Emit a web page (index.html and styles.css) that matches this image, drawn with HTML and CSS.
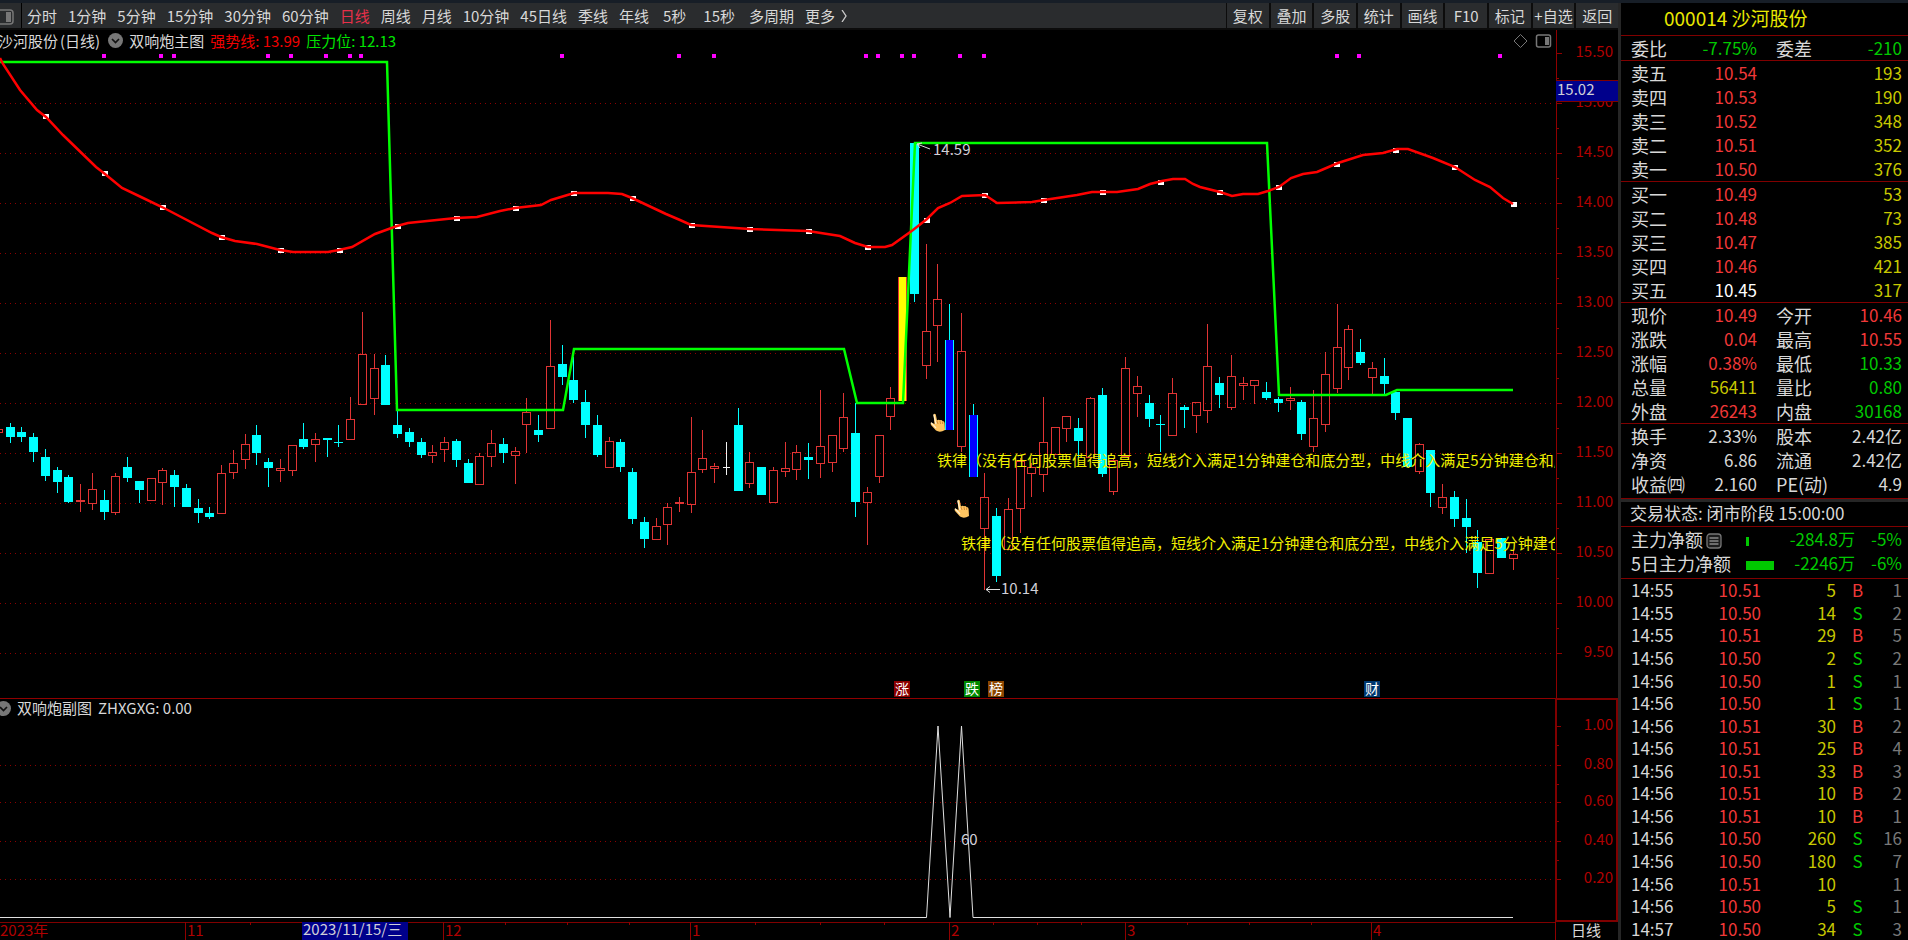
FILE: index.html
```html
<!DOCTYPE html>
<html lang="zh-CN">
<head>
<meta charset="utf-8">
<title>000014 沙河股份</title>
<link rel="stylesheet" href="styles.css">
</head>
<body>
<div class="app">
  <main class="main">
    <header class="toolbar">
      <button class="layout-toggle" aria-label="侧栏">
        <svg width="21" height="24" viewBox="0 0 21 24"><rect x="-5" y="6" width="18" height="14" rx="3" fill="none" stroke="#777" stroke-width="1.5"/><rect x="6" y="8" width="5" height="10" fill="#777"/></svg>
      </button>
      <nav class="periods">
        <button>分时</button><button>1分钟</button><button>5分钟</button><button>15分钟</button><button>30分钟</button><button>60分钟</button><button class="active">日线</button><button>周线</button><button>月线</button><button>10分钟</button><button>45日线</button><button>季线</button><button>年线</button><button class="wide">5秒</button><button class="wide">15秒</button><button>多周期</button><button class="more">更多<svg width="7" height="12" viewBox="0 0 7 12"><path d="M1 0 L5 6 L1 12" fill="none" stroke="#ccc" stroke-width="1.3"/></svg></button>
      </nav>
      <div class="actions">
        <button>复权</button><button>叠加</button><button>多股</button><button>统计</button><button>画线</button><button>F10</button><button>标记</button><button>+自选</button><button>返回</button>
      </div>
    </header>

    <div class="workspace">
      <section class="pane">
        <div class="legend legend-main">
          <span>沙河股份</span><span class="period-name">(日线)</span>
          <svg class="chev" width="15" height="15" viewBox="0 0 15 15"><circle cx="7.5" cy="7.5" r="7.5" fill="#777"/><path d="M4 6 L7.5 9.500 L11 6" fill="none" stroke="#111" stroke-width="1.7"/></svg>
          <span>双响炮主图</span><span class="strong">强势线: 13.99</span><span class="press">压力位: 12.13</span>
          <svg class="tools" width="39" height="16" viewBox="0 0 39 16"><path d="M7.500 1.500 L14 8 L7.500 14.500 L1 8 Z" fill="none" stroke="#777"/><rect x="23.500" y="2" width="14" height="12" rx="2" fill="none" stroke="#777" stroke-width="1.500"/><rect x="32" y="4" width="4" height="8" fill="#777"/></svg>
        </div>
        <svg class="plot" id="price" viewBox="0 52 1555 646" preserveAspectRatio="xMinYMin slice"></svg>
      </section>
      <svg class="scale" id="priceScale" viewBox="0 30 63 668" preserveAspectRatio="xMinYMin slice"></svg>

      <section class="pane pane-sub">
        <div class="legend legend-sub">
          <svg class="chev" width="15" height="15" viewBox="0 0 15 15"><circle cx="7.5" cy="7.5" r="7.5" fill="#777"/><path d="M4 6 L7.5 9.500 L11 6" fill="none" stroke="#111" stroke-width="1.7"/></svg>
          <span>双响炮副图</span><span>ZHXGXG: 0.00</span>
        </div>
        <svg class="plot" id="signal" viewBox="0 720 1555 202" preserveAspectRatio="xMinYMin slice"></svg>
      </section>
      <svg class="scale scale-sub" id="signalScale" viewBox="2 700 59 220" preserveAspectRatio="xMinYMin slice"></svg>

      <svg class="dates" id="dates" viewBox="0 922 1555 18" preserveAspectRatio="xMinYMin slice"></svg>
      <div class="cycle">日线</div>
    </div>
  </main>

  <aside class="quote">
    <h1>000014 沙河股份</h1>
    <table class="grid">
      <colgroup><col class="c-l"><col><col class="c-r"><col></colgroup>
      <tr><th>委比</th><td class="g">-7.75%</td><th>委差</th><td class="g">-210</td></tr>
    </table>
    <table class="grid">
      <colgroup><col class="c-l"><col><col class="c-r"><col></colgroup>
      <tr><th>卖五</th><td class="r">10.54</td><td colspan="2" class="y">193</td></tr>
      <tr><th>卖四</th><td class="r">10.53</td><td colspan="2" class="y">190</td></tr>
      <tr><th>卖三</th><td class="r">10.52</td><td colspan="2" class="y">348</td></tr>
      <tr><th>卖二</th><td class="r">10.51</td><td colspan="2" class="y">352</td></tr>
      <tr><th>卖一</th><td class="r">10.50</td><td colspan="2" class="y">376</td></tr>
    </table>
    <table class="grid">
      <colgroup><col class="c-l"><col><col class="c-r"><col></colgroup>
      <tr><th>买一</th><td class="r">10.49</td><td colspan="2" class="y">53</td></tr>
      <tr><th>买二</th><td class="r">10.48</td><td colspan="2" class="y">73</td></tr>
      <tr><th>买三</th><td class="r">10.47</td><td colspan="2" class="y">385</td></tr>
      <tr><th>买四</th><td class="r">10.46</td><td colspan="2" class="y">421</td></tr>
      <tr><th>买五</th><td class="w">10.45</td><td colspan="2" class="y">317</td></tr>
    </table>
    <table class="grid">
      <colgroup><col class="c-l"><col><col class="c-r"><col></colgroup>
      <tr><th>现价</th><td class="r">10.49</td><th>今开</th><td class="r">10.46</td></tr>
      <tr><th>涨跌</th><td class="r">0.04</td><th>最高</th><td class="r">10.55</td></tr>
      <tr><th>涨幅</th><td class="r">0.38%</td><th>最低</th><td class="g">10.33</td></tr>
      <tr><th>总量</th><td class="y">56411</td><th>量比</th><td class="g">0.80</td></tr>
      <tr><th>外盘</th><td class="r">26243</td><th>内盘</th><td class="g">30168</td></tr>
    </table>
    <table class="grid grid-last">
      <colgroup><col class="c-l"><col><col class="c-r"><col></colgroup>
      <tr><th>换手</th><td>2.33%</td><th>股本</th><td>2.42亿</td></tr>
      <tr><th>净资</th><td>6.86</td><th>流通</th><td>2.42亿</td></tr>
      <tr><th>收益㈣</th><td>2.160</td><th>PE(动)</th><td>4.9</td></tr>
    </table>
    <p class="status">交易状态: 闭市阶段 15:00:00</p>
    <table class="grid flow">
      <colgroup><col class="c-name"><col class="c-bar"><col><col class="c-pct"></colgroup>
      <tr><th>主力净额<svg class="note" width="16" height="16" viewBox="0 0 16 16"><rect x="1" y="1" width="14" height="14" rx="3" fill="#1c1c1c" stroke="#777" stroke-width="1.300"/><path d="M3.500 5 H12.500 M3.500 8 H12.500 M3.500 11 H12.500" stroke="#888" stroke-width="1.300"/></svg></th><td class="bar-cell"><span class="bar" style="width:3px"></span></td><td class="g">-284.8万</td><td class="g">-5%</td></tr>
      <tr><th>5日主力净额</th><td class="bar-cell"><span class="bar" style="width:28px"></span></td><td class="g">-2246万</td><td class="g">-6%</td></tr>
    </table>
    <div class="ticks-wrap">
      <table class="ticks">
        <colgroup><col class="t-time"><col class="t-price"><col class="t-vol"><col class="t-side"><col></colgroup>
        <tbody id="ticks"></tbody>
      </table>
    </div>
  </aside>
</div>
<script src="app.js"></script>
</body>
</html>
```

FILE: styles.css
```css
* { box-sizing: border-box; }
html, body { margin: 0; height: 100%; background: #000; }
body {
  font-family: "Noto Sans CJK SC", "Noto Sans", sans-serif;
  font-size: 15px;
  color: #d8d8d8;
  overflow: hidden;
}
button { font: inherit; color: inherit; background: none; border: 0; padding: 0; white-space: nowrap; }
.app { display: flex; height: 100vh; border-top: 3px solid #171e27; }
.main { flex: 1; min-width: 0; display: flex; flex-direction: column; }

.toolbar { display: flex; height: 27px; background: #2a2c2e; border-bottom: 2px solid #0c0c0c; line-height: 25px; }
.layout-toggle { width: 22px; border-right: 1px solid #000; overflow: hidden; }
.layout-toggle svg { display: block; }
.periods { display: flex; gap: 11px; flex: 1; min-width: 0; overflow: hidden; padding-left: 5px; }
.periods .active { color: #e8304a; }
.periods .wide { padding: 0 3px; }
.periods .more { display: flex; align-items: center; gap: 6px; }
.actions { display: grid; grid-template-columns: repeat(9, 1fr); gap: 2px; width: 392px; background: #0c0c0c; padding-left: 1px; }
.actions button { background: #2a2c2e; overflow: hidden; }

.workspace { flex: 1; min-height: 0; display: grid; grid-template-columns: minmax(0, 1fr) 63px; grid-template-rows: minmax(0, 1fr) 224px 18px; }
.pane { display: flex; flex-direction: column; min-height: 0; overflow: hidden; }
.pane-sub { border-top: 1px solid #900000; }
.legend { display: flex; align-items: center; white-space: nowrap; gap: 6px; line-height: 18px; }
.legend-main { height: 22px; margin-left: -2px; padding-bottom: 1px; }
.legend-sub { height: 21px; margin-left: -4px; padding-bottom: 3px; }
.legend svg { flex: none; }
.period-name { margin-left: -4px; margin-right: 2px; }
.strong { color: #f00000; }
.press { color: #00e400; }
.tools { margin-left: auto; margin-right: 3px; }
.plot { flex: 1; min-height: 0; width: 100%; display: block; }
.scale { width: 100%; height: 100%; display: block; }
.scale-sub { border: 2px solid #800000; }
.dates { width: 100%; height: 100%; display: block; }
.cycle { border-left: 1px solid #900000; text-align: center; line-height: 16px; padding-right: 2px; }

svg text { font-size: 15px; fill: #b00000; }
svg .end { text-anchor: end; }
svg .note-text { fill: #f0f000; }
svg .lite { fill: #d0d0d8; }
svg .tag { font-size: 14px; fill: #fff; text-anchor: middle; }
.dot { stroke: #8c0000; stroke-dasharray: 1 4; }
.crisp { shape-rendering: crispEdges; }

.quote { width: 290px; border-left: 3px solid #262626; display: flex; flex-direction: column; font-size: 17px; }
.quote h1 { margin: 0; height: 33px; line-height: 30px; padding-left: 43px; font-size: 19px; font-weight: 400; color: #e8e800; border-bottom: 1px solid #800000; }
.grid, .ticks { table-layout: fixed; border-collapse: separate; border-spacing: 0; width: 100%; }
.grid { padding: 0 6px 0 10px; border-bottom: 1px solid #800000; }
.grid tr { height: 24px; }
.grid th, .grid td { padding: 0; line-height: 24px; white-space: nowrap; }
.grid th { font-weight: 400; text-align: left; font-size: 18px; }
.grid td { text-align: right; }
.grid th + td + th { padding-left: 19px; }
.c-l { width: 60px; }
.c-r { width: 79px; }
.grid-last { padding-bottom: 2px; }
.status { margin: 0; height: 28px; line-height: 22px; padding-left: 9px; border-top: 3px solid #262626; border-bottom: 1px solid #800000; }
.flow { padding-bottom: 3px; }
.c-name { width: 115px; }
.c-bar { width: 30px; }
.c-pct { width: 47px; }
.note { margin-left: 3px; vertical-align: -2px; }
.grid .bar-cell { text-align: left; }
.bar { display: inline-block; height: 9px; background: #00c800; }
.ticks-wrap { flex: 1; min-height: 0; }
.ticks { height: 100%; padding: 0 6px 0 10px; }
.ticks td { padding: 0; text-align: right; line-height: 22px; }
.ticks td:first-child { text-align: left; }
.ticks td:nth-child(4) { text-align: center; }
.ticks td:last-child { color: #787878; }
.t-time { width: 60px; }
.t-price { width: 70px; }
.t-vol { width: 75px; }
.t-side { width: 43px; }
.r { color: #f03838; }
.g { color: #00c800; }
.y { color: #c8c800; }
.w { color: #fff; }
```

FILE: app.js
```js
const NS = 'http://www.w3.org/2000/svg';
const add = (parent, tag, attrs, text) => {
  const el = document.createElementNS(NS, tag);
  for (const k in attrs) el.setAttribute(k, attrs[k]);
  if (text !== undefined) el.textContent = text;
  parent.appendChild(el);
  return el;
};
const byId = id => document.getElementById(id);

/* One bar per entry: kind, high, low, body top, body bottom.
   Levels are thirds of a pixel below the 13.23 price line. */
const bars = `c 428 488 440 470|c 440 485 455 470|c 460 545 470 515|c 507 602 530 587|c 560 638 571 605|c 586 668 590 665|r 612 695 661 667|r 579 691 628 671|c 631 721 661 695|r 579 706 587 698|c 530 605 560 593|c 604 668 604 631|r 595 664 595 664|r 564 675 569 608|c 571 680 586 620|c 613 680 624 680|c 657 728 684 698|c 681 717 699 710|r 556 703 579 702|r 511 597 549 578|r 462 567 493 541|c 436 556 466 518|c 534 620 545 563|r 538 605 564 574|r 496 587 496 574|c 429 507 477 500|r 459 545 478 496|c 475 530 475 480|c 436 500 486 489|r 351 481 418 481|r 96 376 223 376|r 223 406 265 356|c 226 376 256 376|c 391 473 436 461|c 444 500 455 485|c 474 533 486 526|r 496 548 516 529|r 471 545 486 510|c 477 560 482 541|c 538 609 549 609|r 519 615 527 615|r 451 560 490 532|c 474 548 492 518|r 501 612 512 529|r 354 518 396 436|c 406 485 451 466|r 121 446 258 446|c 196 316 253 290|c 230 368 301 361|c 331 473 366 436|c 406 530 436 526|r 471 563 482 563|c 477 575 486 560|c 564 731 575 717|c 710 804 725 777|r 714 780 738 780|r 670 796 681 735|r 650 695 665 671|r 410 698 576 675|r 451 578 535 570|r 549 608 558 566|w 485 586 561 564|c 384 634 436 634|r 516 623 546 611|c 560 646 560 646|r 561 668 569 668|r 486 590 564 577|r 496 601 516 570|c 489 597 530 541|r 331 593 497 551|r 466 575 466 548|r 339 515 411 507|c 369 710 459 665|r 620 796 636 668|r 466 608 466 590|r 320 451 355 412|y -10 363 -10 363|c -410 65 -410 41|r -107 297 153 259|r -47 245 58 139|b 72 450 181 450|r 99 515 212 502|b 372 592 406 592|r 580 930 652 746|c 684 905 707 889|r 654 810 686 810|r 535 759 543 686|r 550 650 560 581|r 350 635 487 585|r 442 525 442 525|r 407 485 407 446|c 415 535 445 484|r 351 535 355 535|c 324 590 344 581|r 535 646 540 637|r 230 531 265 531|r 287 410 317 342|c 346 440 369 417|c 406 515 432 436|r 294 469 340 469|c 376 443 380 391|r 366 458 366 409|r 132 428 258 394|c 291 383 309 346|r 226 391 288 383|r 291 361 309 319|r 301 372 301 319|c 305 361 335 353|c 350 395 358 369|r 320 391 354 364|c 361 481 366 462|r 331 515 415 500|r 216 455 283 436|r 72 338 201 326|r 136 301 148 263|c 178 256 215 248|r 245 342 265 293|c 234 346 287 312|c 335 421 335 399|c 414 560 414 560|r 489 582 493 575|c 511 680 511 638|r 612 702 651 683|c 634 741 650 717|c 657 818 714 741|c 750 923 785 879|r 778 882 778 882|c 775 834 775 834|r 811 871 823 836`
  .split('|').map(s => s.split(' '));

const price = byId('price');
for (let y = 103; y <= 653; y += 50)
  add(price, 'path', { d: `M0 ${y}.5H1555`, class: 'dot crisp' });

const INK = { c: '#00ffff', r: '#e03434', w: '#f0f0f0', y: '#e03030', b: '#00ffff' };
const candles = add(price, 'g', { class: 'crisp' });
const rect = (x, y, w, h, fill) => add(candles, 'rect', { x, y, width: w, height: h, fill });
rect(-5, 429, 8, 1, INK.r); rect(-5, 432, 8, 1, INK.r); rect(2, 429, 1, 4, INK.r);
bars.forEach(([kind, ...levels], i) => {
  const [hi, lo, top, bot] = levels.map(v => Math.round(280 + v / 3));
  const x = Math.round(9.7 + i * 11.742);
  const ink = INK[kind];
  const h = Math.max(1, bot - top);
  if (kind === 'r') {
    if (top > hi) rect(x, hi, 1, top - hi, ink);
    if (lo > bot) rect(x, bot, 1, lo - bot, ink);
    if (h < 3) rect(x - 4, top, 9, h, ink);
    else add(candles, 'rect', { x: x - 3.5, y: top + 0.5, width: 8, height: h - 1, fill: 'none', stroke: ink });
  } else {
    rect(x, hi, 1, Math.max(1, lo - hi), ink);
    rect(kind === 'w' ? x - 3 : x - 4, top, kind === 'w' ? 7 : 9, h, ink);
    if (kind === 'y') rect(x - 3, top, 7, h, '#ffff00');
    if (kind === 'b') rect(x - 3, top, 7, h, '#0000ff');
  }
});

const ma = [[0,58],[3,64],[20,90],[37,110],[46,117],[63,135],[96,167],[105,174],[122,188],[141,197],[162,207],[212,233],[221,237],[235,241],[257,244],[280,250],[293,252],[328,252],[339,250],[352,247],[375,234],[397,226],[408,223],[456,218],[477,217],[500,211],[515,208],[541,205],[551,200],[574,193],[608,193],[622,194],[632,198],[666,214],[680,220],[691,225],[750,229],[808,231],[840,236],[855,243],[868,247],[885,247],[892,245],[913,230],[927,219],[938,208],[950,203],[962,196],[985,195],[997,203],[1032,202],[1044,200],[1077,195],[1092,192],[1117,192],[1138,189],[1150,184],[1162,181],[1173,179],[1185,179],[1193,184],[1200,187],[1220,192],[1232,196],[1243,194],[1258,194],[1268,191],[1279,187],[1291,178],[1303,174],[1317,172],[1338,163],[1363,155],[1383,153],[1397,149],[1408,149],[1433,158],[1455,167],[1475,180],[1490,187],[1503,198],[1513,204]];
const yAt = x => {
  const k = ma.findIndex(p => p[0] >= x);
  if (k <= 0) return ma[k < 0 ? ma.length - 1 : 0][1];
  const [a, b] = [ma[k - 1], ma[k]];
  return a[1] + (b[1] - a[1]) * (x - a[0]) / (b[0] - a[0]);
};
for (let n = 0; n < 26; n++) {
  const x = Math.round(45 + n * 58.7);
  add(price, 'rect', { x: x - 2, y: Math.round(yAt(x)) - 2, width: 6, height: 5, fill: '#fff' });
}
add(price, 'polyline', { points: '0,62 387,62 397,410 563,410 574,349 844,349 857,403 903,403 915,143 1267,143 1279,395 1386,395 1397,390 1513,390', fill: 'none', stroke: '#00ff00', 'stroke-width': 2.5 });
add(price, 'polyline', { points: ma.join(' '), fill: 'none', stroke: '#ff0000', 'stroke-width': 2.5 });

[104,161,174,268,291,326,350,361,562,679,714,866,878,902,914,960,984,1337,1359,1500].forEach(x =>
  add(price, 'rect', { x: x - 2, y: 54, width: 4, height: 4, fill: '#ff00ff' }));

const rule = '铁律（没有任何股票值得追高，短线介入满足1分钟建仓和底分型，中线介入满足5分钟建仓和底分型';
add(price, 'text', { x: 937, y: 466, class: 'note-text' }, rule);
add(price, 'text', { x: 961, y: 549, class: 'note-text' }, rule);

add(price, 'path', { d: 'M917 144L930 149M917 144l5 -1M917 144l3 4', stroke: '#ddd', fill: 'none' });
add(price, 'text', { x: 933, y: 155, class: 'lite' }, '14.59');
add(price, 'path', { d: 'M986 589.5H1000M986 589.5l4 -3M986 589.5l4 3', stroke: '#ddd', fill: 'none' });
add(price, 'text', { x: 1001, y: 594, class: 'lite' }, '10.14');

[[930, 413], [954, 499]].forEach(([x, y]) => {
  const g = add(price, 'g', { transform: `translate(${x} ${y})` });
  add(g, 'path', { d: 'M3.500 1.500Q4.500 0 5.800 1.500L7 7.500Q8.500 6 10 7.300Q11.500 6.300 12.500 8Q14.500 8 14.600 10L15 17Q10 20 6 17.500L1 12Q0 10 1.500 9.500L4.500 11Z', fill: '#ffc561' });
  add(g, 'path', { d: 'M3.800 1.500L6 11M1 9.700L6 15', stroke: '#fff0d0', fill: 'none', 'stroke-width': 1.2 });
  add(g, 'path', { d: 'M7 8L8 11M10 8L10.500 11M12.600 8.500V11', stroke: '#c97d2c', fill: 'none', 'stroke-width': 0.8 });
});

[[894, '涨', '#8b0000'], [964, '跌', '#008800'], [988, '榜', '#8a4500'], [1364, '财', '#00386e']].forEach(([x, s, fill]) => {
  add(price, 'rect', { x, y: 681, width: 16, height: 16, fill });
  add(price, 'text', { x: x + 8, y: 694, class: 'tag' }, s);
});

const ps = byId('priceScale');
add(ps, 'path', { d: 'M1 30V698', stroke: '#900000', class: 'crisp' });
for (let n = 0; n < 13; n++) {
  const y = 53 + n * 50;
  add(ps, 'path', { d: `M1 ${y}.5H7` + (n < 12 ? `M1 ${y + 25}.5H4` : ''), stroke: '#900000', class: 'crisp' });
  add(ps, 'text', { x: 58, y: y + 4, class: 'end' }, (15.5 - n * 0.5).toFixed(2));
}
add(ps, 'rect', { x: 1, y: 81, width: 62, height: 20, fill: '#00008b' });
add(ps, 'path', { d: 'M1 80.5H63M1 101.5H63', stroke: '#800000' });
add(ps, 'text', { x: 2, y: 95, class: 'lite' }, '15.02');

const sg = byId('signal');
[765, 802, 841, 879].forEach(y => add(sg, 'path', { d: `M0 ${y}.5H1555`, class: 'dot crisp' }));
add(sg, 'polyline', { points: '0,917.5 926.5,917.5 938,726 950,917.5 961.5,726 973,917.5 1513,917.5', fill: 'none', stroke: '#e0e0e0', 'stroke-linejoin': 'bevel' });
add(sg, 'text', { x: 961, y: 845, class: 'lite' }, '60');

const ss = byId('signalScale');
[[726, '1.00'], [765, '0.80'], [802, '0.60'], [841, '0.40'], [879, '0.20']].forEach(([y, s]) => {
  add(ss, 'path', { d: `M2 ${y}.5H6` + (y < 879 ? `M2 ${y + 19}.5H4` : ''), stroke: '#900000', class: 'crisp' });
  add(ss, 'text', { x: 58, y: y + 4, class: 'end' }, s);
});

const dt = byId('dates');
add(dt, 'path', { d: 'M0 922.5H1555', stroke: '#800000' });
[250, 505, 567, 629, 755, 820, 884, 993, 1037, 1081, 1187, 1249, 1311].forEach(x =>
  add(dt, 'path', { d: `M${x}.5 922V925`, stroke: '#900000' }));
add(dt, 'text', { x: 0, y: 936 }, '2023年');
[[185, '11'], [443, '12'], [690, '1'], [949, '2'], [1125, '3'], [1371, '4']].forEach(([x, s]) => {
  add(dt, 'path', { d: `M${x}.5 922V940`, stroke: '#900000' });
  add(dt, 'text', { x: x + 2, y: 936 }, s);
});
add(dt, 'rect', { x: 302, y: 922, width: 106, height: 18, fill: '#00008b' });
add(dt, 'text', { x: 303, y: 935, class: 'lite' }, '2023/11/15/三');

const ticks = `14:55 10.51 5 B 1|14:55 10.50 14 S 2|14:55 10.51 29 B 5|14:56 10.50 2 S 2|14:56 10.50 1 S 1|14:56 10.50 1 S 1|14:56 10.51 30 B 2|14:56 10.51 25 B 4|14:56 10.51 33 B 3|14:56 10.51 10 B 2|14:56 10.51 10 B 1|14:56 10.50 260 S 16|14:56 10.50 180 S 7|14:56 10.51 10 - 1|14:56 10.50 5 S 1|14:57 10.50 34 S 3`;
byId('ticks').innerHTML = ticks.split('|').map(row => {
  const [t, p, v, s, n] = row.split(' ');
  return `<tr><td>${t}</td><td class="r">${p}</td><td class="y">${v}</td><td class="${s === 'B' ? 'r' : 'g'}">${s === '-' ? '' : s}</td><td>${n}</td></tr>`;
}).join('');
```
